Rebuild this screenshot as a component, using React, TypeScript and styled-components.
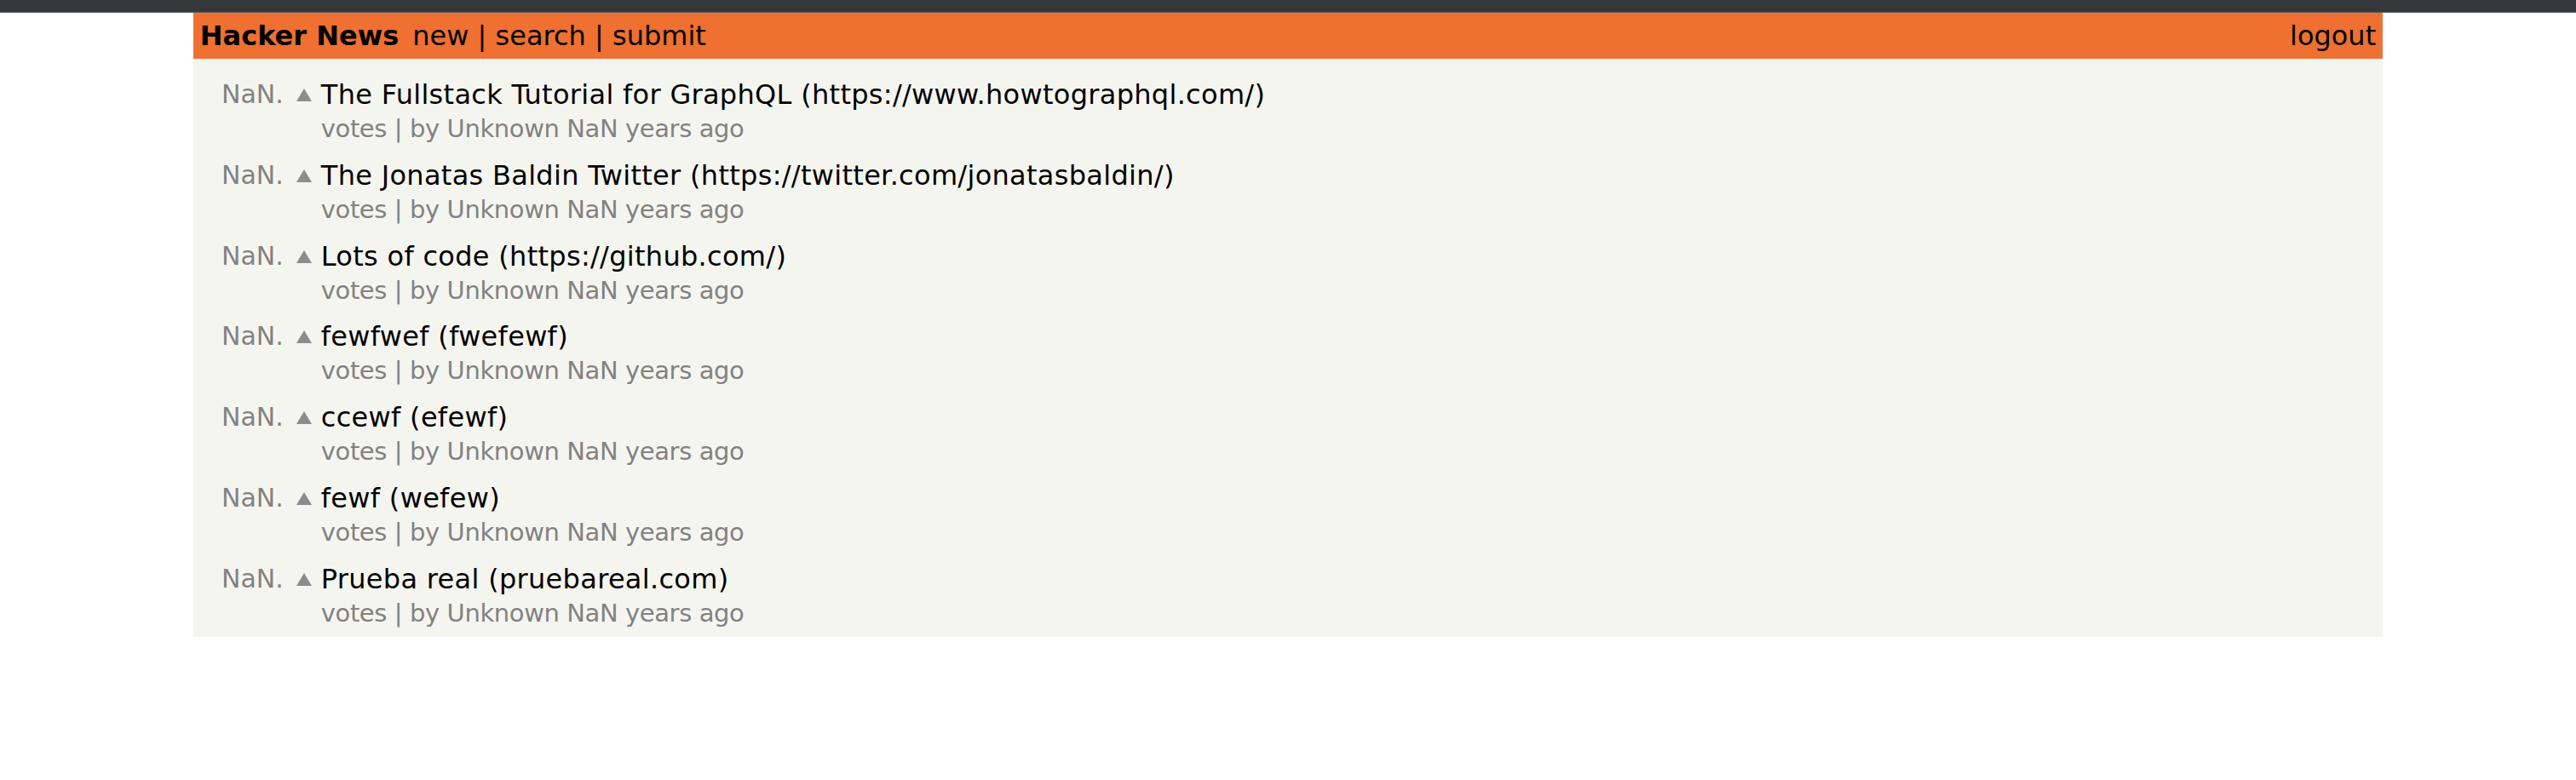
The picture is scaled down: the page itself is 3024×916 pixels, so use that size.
import React from 'react';
import styled, { createGlobalStyle } from 'styled-components';

type Link = {
  id: number,
  description: string,
  url: string,
}

const links: Link[] = [
  { id: 1, description: 'The Fullstack Tutorial for GraphQL', url: 'https://www.howtographql.com/' },
  { id: 2, description: 'The Jonatas Baldin Twitter', url: 'https://twitter.com/jonatasbaldin/' },
  { id: 3, description: 'Lots of code', url: 'https://github.com/' },
  { id: 4, description: 'fewfwef', url: 'fwefewf' },
  { id: 5, description: 'ccewf', url: 'efewf' },
  { id: 6, description: 'fewf', url: 'wefew' },
  { id: 7, description: 'Prueba real', url: 'pruebareal.com' },
];

const GlobalStyle = createGlobalStyle`
  body {
    margin: 0;
    background: #ffffff;
    font-family: "DejaVu Sans", Verdana, sans-serif;
  }
`;

const Chrome = styled.div`
  height: 14px;
  background: #36373b;
  border-bottom: 1px solid #5d5e62;
`;

const Page = styled.div`
  width: 85%;
  margin: 0 auto;
  background: #f5f5ef;
`;

const Header = styled.div`
  display: flex;
  align-items: center;
  height: 54px;
  padding: 0 8px;
  background: #ef7030;
  color: #000000;
  font-size: 32px;
`;

const Brand = styled.span`
  font-weight: bold;
  margin-right: 16px;
`;

const NavLinks = styled.div`
  display: flex;
  align-items: center;
`;

const Logout = styled.div`
  margin-left: auto;
`;

const List = styled.div`
  padding: 22px 0 8px;
`;

const Item = styled.div`
  display: grid;
  grid-template-columns: 106px 44px 1fr;
  grid-template-rows: 40px 40px;
  margin-bottom: 14.8px;

  &:last-child {
    margin-bottom: 0;
  }
`;

const Rank = styled.div`
  color: #828282;
  font-size: 30px;
  line-height: 40px;
  text-align: right;
`;

const Vote = styled.div`
  display: flex;
  justify-content: flex-start;
  padding: 13px 0 0 15px;
`;

const Title = styled.div`
  font-size: 32px;
  letter-spacing: 0.3px;
  line-height: 40px;
  color: #000000;
  white-space: nowrap;
`;

const Meta = styled.div`
  grid-column: 3;
  font-size: 29px;
  letter-spacing: -0.4px;
  line-height: 40px;
  color: #828282;
  white-space: nowrap;
`;

const Arrow = () => (
  <svg width="18" height="15" viewBox="0 0 18 15">
    <polygon points="9,0 18,15 0,15" fill="#8c8c8c" />
  </svg>
);

const App = () => {
  return (
    <>
      <GlobalStyle />
      <Chrome />
      <Page>
        <Header>
          <Brand>Hacker News</Brand>
          <NavLinks>new | search | submit</NavLinks>
          <Logout>logout</Logout>
        </Header>
        <List>
          {links.map(link => (
            <Item key={link.id}>
              <Rank>NaN.</Rank>
              <Vote><Arrow /></Vote>
              <Title>{link.description} ({link.url})</Title>
              <Meta>votes | by Unknown NaN years ago</Meta>
            </Item>
          ))}
        </List>
      </Page>
    </>
  );
}

export default App;
